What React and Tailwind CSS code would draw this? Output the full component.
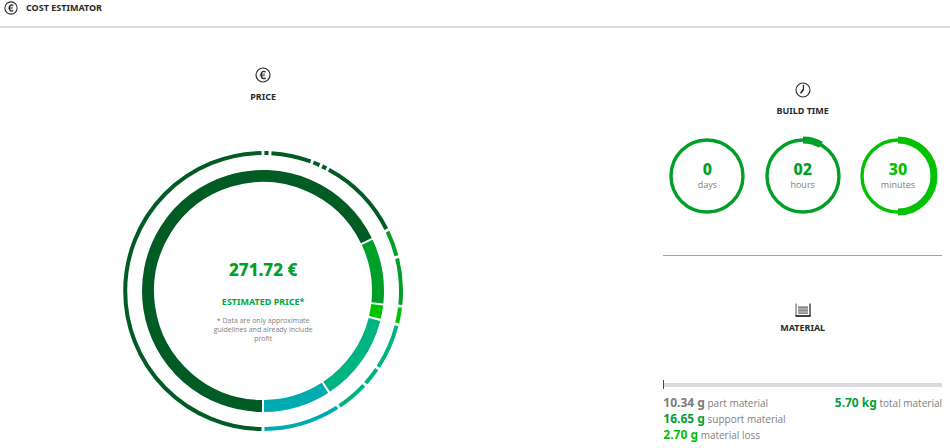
import React from "react";

const innerSegments = [
  { from: -180, to: 64.5, color: "#005c24" },
  { from: 64.5, to: 96.4, color: "#009f28" },
  { from: 96.4, to: 103.8, color: "#00c200" },
  { from: 103.8, to: 146.9, color: "#00b482" },
  { from: 146.9, to: 180, color: "#00abaf" },
];

const outerSegments = [
  { from: 0, to: 2.9, color: "#005c24" },
  { from: 2.9, to: 20.8, color: "#005c24" },
  { from: 20.8, to: 24.8, color: "#005c24" },
  { from: 24.8, to: 27.9, color: "#005c24" },
  { from: 27.9, to: 63.9, color: "#005c24" },
  { from: 63.9, to: 75.8, color: "#009f28" },
  { from: 75.8, to: 96.3, color: "#009f28" },
  { from: 96.3, to: 104, color: "#00c200" },
  { from: 104, to: 123.9, color: "#00b482" },
  { from: 123.9, to: 132.5, color: "#00b482" },
  { from: 132.5, to: 146.9, color: "#00b482" },
  { from: 146.9, to: 180, color: "#00abaf" },
  { from: 180, to: 360, color: "#005c24" },
];

const times = [
  { value: "0", unit: "days", share: 0, color: "#009f28", text: "text-[#009f28]" },
  { value: "02", unit: "hours", share: 30, color: "#009f28", text: "text-[#009f28]" },
  { value: "30", unit: "minutes", share: 180, color: "#00c200", text: "text-[#00c200]" },
];

const materials = [
  { amount: "10.34 g", name: "part material", text: "text-[#7b7b7b]" },
  { amount: "16.65 g", name: "support material", text: "text-[#009f3c]" },
  { amount: "2.70 g", name: "material loss", text: "text-[#00c200]" },
];

// angles are degrees, clockwise from the top
const arc = (c, r, from, to) => {
  const point = (deg) => {
    const a = (deg * Math.PI) / 180;
    return `${(c + r * Math.sin(a)).toFixed(2)} ${(c - r * Math.cos(a)).toFixed(2)}`;
  };
  const large = to - from > 180 ? 1 : 0;
  return `M${point(from)} A${r} ${r} 0 ${large} 1 ${point(to)}`;
};

function Ring({ segments, r, width, gap }) {
  return segments.map((s) => (
    <path key={s.from} d={arc(140, r, s.from + gap, s.to - gap)} stroke={s.color} strokeWidth={width} fill="none" />
  ));
}

function EuroIcon({ className }) {
  return (
    <svg viewBox="0 0 16 16" className={className} fill="none" stroke="#2b2b2b" aria-hidden="true">
      <circle cx="8" cy="8" r="7" strokeWidth="1.2" />
      <path d="M10.6 5.2C9.9 4.6 9.3 4.4 8.7 4.4C7.2 4.4 6.3 5.9 6.3 8S7.2 11.6 8.7 11.6C9.4 11.6 10 11.4 10.6 10.9" strokeWidth="1.4" />
      <path d="M4.8 7.2H10M4.8 8.8H9.7" strokeWidth="0.8" />
    </svg>
  );
}

function ClockIcon() {
  return (
    <svg viewBox="0 0 16 16" className="size-4" fill="none" stroke="#2b2b2b" aria-hidden="true">
      <circle cx="8" cy="8" r="7" strokeWidth="1.1" />
      <path d="M8.4 2.8V8" strokeWidth="1.3" />
      <path d="M8.5 7.4L5.6 11.2" strokeWidth="1.7" />
    </svg>
  );
}

function MaterialIcon() {
  return (
    <svg viewBox="0 0 16 16" className="size-4" fill="none" aria-hidden="true">
      <path d="M1 1.5V14" stroke="#555" strokeWidth="1" />
      <path d="M15 1.5V14" stroke="#2b2b2b" strokeWidth="1.3" />
      <path d="M0.5 14H15.6" stroke="#2b2b2b" strokeWidth="1.8" />
      <rect x="3" y="4" width="10" height="8" fill="#a8a8a8" />
      <path d="M3 5.5H13M3 8.5H13M3 11.5H13" stroke="#8c8c8c" strokeWidth="1" />
    </svg>
  );
}

function TimeDial({ value, unit, share, color, text }) {
  return (
    <div className="grid place-items-center">
      <svg viewBox="0 0 80 80" className="col-start-1 row-start-1 size-20" fill="none" stroke={color} aria-hidden="true">
        <circle cx="40" cy="40" r="36" strokeWidth="3.4" />
        {share > 0 && <path d={arc(40, 36, 0, share)} strokeWidth="7" />}
      </svg>
      <div className="col-start-1 row-start-1 pb-0.5 text-center">
        <p className={`text-[16px] leading-5 font-extrabold ${text}`}>{value}</p>
        <p className="font-['Open_Sans',sans-serif] text-[9px] leading-3 text-[#808080]">{unit}</p>
      </div>
    </div>
  );
}

export default function App() {
  return (
    <div className="bg-white font-['Noto_Sans',sans-serif] text-[#2b2b2b]">
      <header className="flex h-7 items-start gap-2 border-b-2 border-[#dcdcdc] px-1">
        <EuroIcon className="mt-px size-[14px]" />
        <h1 className="text-[9px] leading-4 font-bold">COST ESTIMATOR</h1>
      </header>

      <main className="grid grid-cols-[17fr_9fr] gap-[137px] pr-2">
        <section className="flex flex-col items-center pt-[39px]">
          <EuroIcon className="size-4" />
          <h2 className="mt-2 text-[9px] leading-3 font-bold">PRICE</h2>
          <div className="mt-12 grid place-items-center">
            <svg viewBox="0 0 280 280" className="col-start-1 row-start-1 size-[280px]" aria-hidden="true">
              <Ring segments={outerSegments} r={138} width={4} gap={0.6} />
              <Ring segments={innerSegments} r={115} width={12} gap={0.5} />
            </svg>
            <div className="col-start-1 row-start-1 flex w-28 flex-col items-center pt-5 text-center">
              <p className="text-[17px] leading-5 font-extrabold text-[#009f28]">271.72 €</p>
              <h3 className="mt-4 text-[9px] leading-3 font-bold whitespace-nowrap text-[#00a83c]">ESTIMATED PRICE*</h3>
              <p className="mt-2 font-['Open_Sans',sans-serif] text-[7px] leading-[9px] text-[#808080]">
                * Data are only approximate guidelines and already include profit
              </p>
            </div>
          </div>
        </section>

        <div className="flex flex-col pt-[54px]">
          <section className="border-b border-[#a0a0a0] pb-[39px]">
            <div className="flex flex-col items-center">
              <ClockIcon />
              <h2 className="mt-[7px] text-[9px] leading-3 font-bold">BUILD TIME</h2>
            </div>
            <div className="mt-[19px] flex justify-between px-1">
              {times.map((t) => (
                <TimeDial key={t.unit} {...t} />
              ))}
            </div>
          </section>

          <section className="pt-[46px]">
            <div className="flex flex-col items-center">
              <MaterialIcon />
              <h2 className="mt-1 text-[9px] leading-3 font-bold">MATERIAL</h2>
            </div>
            <div className="mt-[46px] flex h-[9px] items-center border-l border-[#006b3c]">
              <div className="h-1 w-full bg-[#dadada]" />
            </div>
            <div className="mt-1.5 flex items-start justify-between font-['Open_Sans',sans-serif] text-[10px] leading-4 text-[#808080]">
              <ul>
                {materials.map((m) => (
                  <li key={m.name}>
                    <span className={`font-['Noto_Sans',sans-serif] text-[12px] font-bold ${m.text}`}>{m.amount}</span> {m.name}
                  </li>
                ))}
              </ul>
              <p>
                <span className="font-['Noto_Sans',sans-serif] text-[12px] font-bold text-[#009f3c]">5.70 kg</span> total material
              </p>
            </div>
          </section>
        </div>
      </main>
    </div>
  );
}
